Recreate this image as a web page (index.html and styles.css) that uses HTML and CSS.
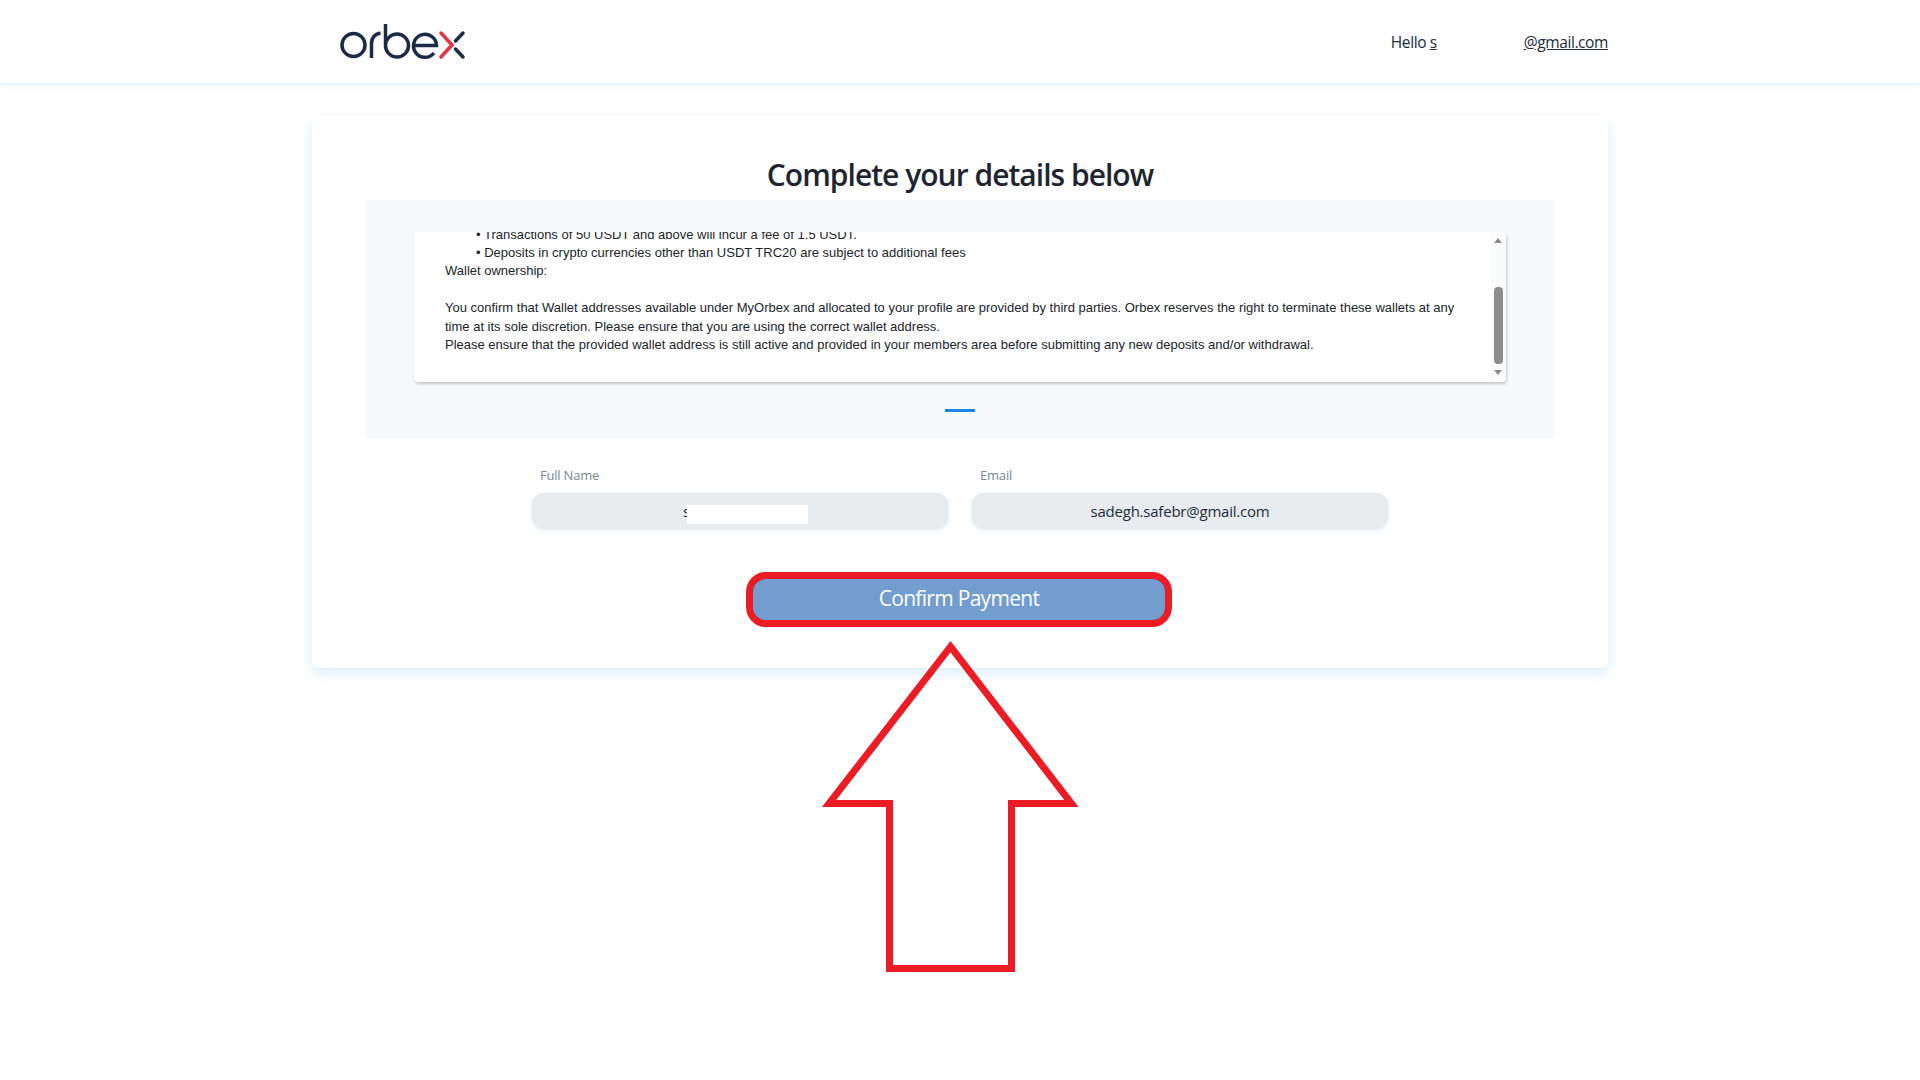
FILE: index.html
```html
<!DOCTYPE html>
<html lang="en">
<head>
<meta charset="utf-8">
<title>Orbex - Complete your details</title>
<link rel="stylesheet" href="styles.css">
</head>
<body>
<header class="topbar">
  <div class="topbar-inner">
    <svg class="logo" width="126" height="36" viewBox="0 0 126 36" fill="none" stroke-width="3.500">
      <circle cx="13.500" cy="21" r="11.500" stroke="#1b2a47"/>
      <path d="M31.500 34V19.500C31.500 13 35 10 40.500 9" stroke="#1b2a47"/>
      <path d="M45.500 0V22M45.500 21.500a11.500 11.500 0 1 0 23 0a11.500 11.500 0 1 0 -23 0" stroke="#1b2a47"/>
      <path d="M74 21.500H96.500A11.500 11.500 0 1 0 94 29" stroke="#1b2a47"/>
      <path d="M101 9L112 21L101 33" stroke="#e8323f" stroke-linecap="round"/>
      <path d="M123 9L115.500 17M115.500 25L123 33" stroke="#1b2a47" stroke-linecap="round"/>
    </svg>
    <div class="user">
      <span>Hello <u>s</u></span>
      <u class="user-mail">@gmail.com</u>
    </div>
  </div>
</header>
<main class="card">
  <h1 class="title">Complete your details below</h1>
  <section class="carousel">
    <svg class="chev" width="16" height="30" viewBox="0 0 16 30" fill="none" stroke="#ffffff"><path d="M14 1L2 15L14 29"/></svg>
    <div class="terms">
      <div class="terms-text">
        <div class="bullet">• Transactions of 50 USDT and above will incur a fee of 1.5 USDT.</div>
        <div class="bullet">• Deposits in crypto currencies other than USDT TRC20 are subject to additional fees</div>
        <div>Wallet ownership:</div>
        <div class="blank"></div>
        <div>You confirm that Wallet addresses available under MyOrbex and allocated to your profile are provided by third parties. Orbex reserves the right to terminate these wallets at any time at its sole discretion. Please ensure that you are using the correct wallet address.</div>
        <div>Please ensure that the provided wallet address is still active and provided in your members area before submitting any new deposits and/or withdrawal.</div>
      </div>
      <div class="scrollbar">
        <span class="arrow-up"></span>
        <span class="thumb"></span>
        <span class="arrow-down"></span>
      </div>
    </div>
    <svg class="chev" width="16" height="30" viewBox="0 0 16 30" fill="none" stroke="#ffffff"><path d="M2 1L14 15L2 29"/></svg>
    <span class="indicator"></span>
  </section>
  <div class="fields">
    <div class="field">
      <label class="field-label">Full Name</label>
      <div class="field-box"><span class="name-value">s</span><span class="redact"></span></div>
    </div>
    <div class="field">
      <label class="field-label">Email</label>
      <div class="field-box">sadegh.safebr@gmail.com</div>
    </div>
  </div>
  <div class="mark">
    <button class="confirm" type="button">Confirm Payment</button>
  </div>
</main>
<svg class="big-arrow" width="280" height="350" viewBox="0 0 280 350" fill="none">
  <path d="M140.500 16.700L261.500 173.500H201.500V338.500H79.500V173.500H19Z" stroke="#ed1c24" stroke-width="7" stroke-miterlimit="10"/>
</svg>
</body>
</html>
```
FILE: styles.css
```css
* { box-sizing: border-box; }
html, body { margin: 0; padding: 0; }
body {
  position: relative;
  height: 1080px;
  overflow: hidden;
  background: #ffffff;
  font-family: "Open Sans", "Noto Sans", sans-serif;
  color: #212b3c;
}
.topbar {
  height: 83px;
  background: #ffffff;
  box-shadow: 0 2px 6px rgba(90, 165, 250, 0.16);
}
.topbar-inner {
  width: 1296px;
  margin: 0 auto;
  padding: 24px 0 0 28px;
  display: flex;
  align-items: flex-start;
  justify-content: space-between;
}
.logo { display: block; }
.user {
  display: flex;
  gap: 87px;
  padding: 7.500px 0 0 0;
  font-size: 15.500px;
  line-height: 20px;
  letter-spacing: -0.400px;
}
.card {
  width: 1296px;
  height: 552px;
  margin: 33px auto 0;
  padding: 39px 53px 0;
  background: #ffffff;
  border-radius: 8px;
  box-shadow: 0 5px 12px rgba(80, 160, 250, 0.2);
  display: flex;
  flex-direction: column;
  align-items: center;
}
.title {
  margin: 0;
  height: 45px;
  font-size: 30px;
  line-height: 40px;
  font-weight: 600;
  letter-spacing: -0.980px;
  color: #1e2530;
  text-align: center;
  white-space: nowrap;
}
.carousel {
  position: relative;
  width: 1190px;
  height: 238px;
  background: #f8f9fa;
  padding-top: 32px;
  display: flex;
  align-items: flex-start;
  justify-content: space-between;
}
.chev { margin: 73px 24px 0; flex: none; }
.terms {
  width: 1092px;
  height: 150px;
  background: #ffffff;
  border-radius: 4px;
  box-shadow: 1px 2px 3px rgba(0, 0, 0, 0.2);
  display: flex;
  overflow: hidden;
  flex: none;
  margin: 0 -21px;
}
.terms-text {
  flex: 1;
  margin-top: -19px;
  padding: 12.500px 20px 0 31px;
  font-family: "Liberation Sans", Arial, sans-serif;
  font-size: 13px;
  line-height: 18.400px;
  color: #212529;
}
.bullet { padding-left: 31px; }
.blank { height: 18.400px; }
.scrollbar {
  width: 15px;
  flex: none;
  position: relative;
  background: #fafbfb;
}
.thumb {
  position: absolute;
  left: 3px;
  top: 55px;
  width: 9px;
  height: 77px;
  background: #8c8c8c;
  border-radius: 4px;
}
.arrow-up, .arrow-down {
  position: absolute;
  left: 3px;
  width: 0;
  height: 0;
  border-left: 4.500px solid transparent;
  border-right: 4.500px solid transparent;
}
.arrow-up { top: 6px; border-bottom: 5px solid #8c8c8c; }
.arrow-down { bottom: 7px; border-top: 5px solid #8c8c8c; }
.indicator {
  position: absolute;
  left: 580px;
  top: 209px;
  width: 30px;
  height: 3px;
  background: #1e88e5;
}
.fields {
  margin-top: 28px;
  display: flex;
  gap: 24px;
}
.field { width: 416px; }
.field-label {
  display: block;
  padding-left: 8px;
  font-size: 13px;
  line-height: 18px;
  height: 27px;
  letter-spacing: -0.200px;
  color: #7b8794;
}
.field-box {
  position: relative;
  height: 36px;
  border-radius: 12px;
  background: #e9ecef;
  box-shadow: 0 1px 4px rgba(120, 180, 240, 0.25);
  text-align: center;
  font-size: 15px;
  line-height: 37px;
  letter-spacing: -0.220px;
  color: #212b3c;
}
.name-value {
  position: absolute;
  left: 151px;
  top: 0;
}
.redact {
  position: absolute;
  left: 155px;
  top: 12px;
  width: 121px;
  height: 19px;
  background: #ffffff;
}
.mark {
  margin: 43px 2px 0 0;
  width: 426px;
  height: 55px;
  border: 7px solid #ed1c24;
  border-radius: 20px;
  overflow: hidden;
  background: #2a86e0;
}
.confirm {
  display: block;
  width: 100%;
  height: 100%;
  border: 0;
  padding: 0 0 3px;
  background: #739dce;
  color: #ffffff;
  font-family: "Open Sans", "Noto Sans", sans-serif;
  font-size: 21px;
  letter-spacing: -0.700px;
  border-radius: 13px 13px 11px 11px;
}
.big-arrow {
  position: absolute;
  left: 810px;
  top: 630px;
}
```
